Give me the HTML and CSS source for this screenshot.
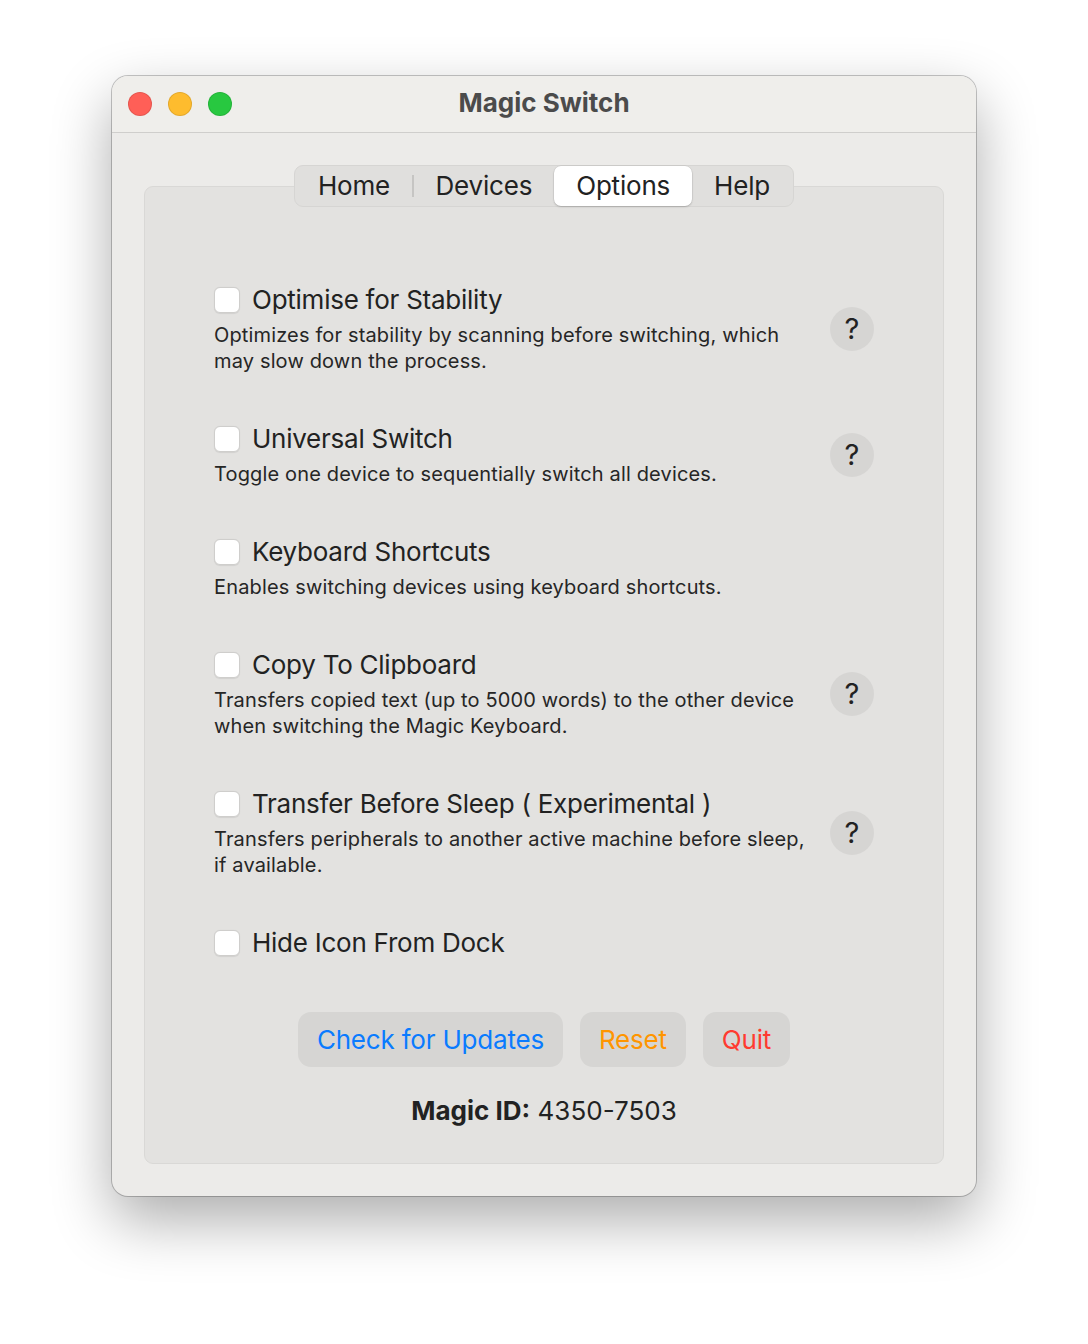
FILE: index.html
```html
<html>
<head>
  <title>Magic Switch</title>
  <link rel="stylesheet" href="styles.css">
</head>
<body>
  <div class="window">
    <div class="titlebar">
      <div class="lights">
        <span class="light close"></span>
        <span class="light min"></span>
        <span class="light max"></span>
      </div>
      <div class="title">Magic Switch</div>
    </div>

    <div class="main">
      <div class="tabs">
        <div class="tab">Home</div>
        <div class="sep"></div>
        <div class="tab">Devices</div>
        <div class="tab active">Options</div>
        <div class="tab">Help</div>
      </div>

      <div class="panel">
        <div class="option">
          <div class="option-text">
            <label class="option-title"><span class="check"></span>Optimise for Stability</label>
            <div class="option-desc">Optimizes for stability by scanning before switching, which may slow down the process.</div>
          </div>
          <div class="help">?</div>
        </div>

        <div class="option">
          <div class="option-text">
            <label class="option-title"><span class="check"></span>Universal Switch</label>
            <div class="option-desc">Toggle one device to sequentially switch all devices.</div>
          </div>
          <div class="help">?</div>
        </div>

        <div class="option">
          <div class="option-text">
            <label class="option-title"><span class="check"></span>Keyboard Shortcuts</label>
            <div class="option-desc">Enables switching devices using keyboard shortcuts.</div>
          </div>
        </div>

        <div class="option">
          <div class="option-text">
            <label class="option-title"><span class="check"></span>Copy To Clipboard</label>
            <div class="option-desc">Transfers copied text (up to 5000 words) to the other device when switching the Magic Keyboard.</div>
          </div>
          <div class="help">?</div>
        </div>

        <div class="option">
          <div class="option-text">
            <label class="option-title"><span class="check"></span>Transfer Before Sleep ( Experimental )</label>
            <div class="option-desc">Transfers peripherals to another active machine before sleep, if available.</div>
          </div>
          <div class="help">?</div>
        </div>

        <div class="option">
          <div class="option-text">
            <label class="option-title"><span class="check"></span>Hide Icon From Dock</label>
          </div>
        </div>

        <div class="actions">
          <button class="btn blue">Check for Updates</button>
          <button class="btn orange">Reset</button>
          <button class="btn red">Quit</button>
        </div>

        <div class="magic-id"><b>Magic ID:</b> 4350-7503</div>
      </div>
    </div>
  </div>
</body>
</html>
```

FILE: styles.css
```css
html, body {
  margin: 0;
  padding: 0;
}
body {
  background: #fff;
  font-family: Inter, "Noto Sans", sans-serif;
  color: #222;
  padding-top: 76px;
  display: flex;
  justify-content: center;
  height: 1344px;
  box-sizing: border-box;
}
.window {
  width: 864px;
  height: 1120px;
  box-sizing: border-box;
  background: #ecebe9;
  border-radius: 16px;
  box-shadow: 0 0 0 1px rgba(0, 0, 0, 0.22), 0 24px 60px rgba(0, 0, 0, 0.33);
  overflow: hidden;
  display: flex;
  flex-direction: column;
}
.titlebar {
  height: 56px;
  flex: none;
  background: #efeeeb;
  border-bottom: 1px solid #cfcecc;
  display: flex;
  align-items: center;
  position: relative;
}
.lights {
  display: flex;
  gap: 16px;
  padding-left: 16px;
}
.light {
  width: 24px;
  height: 24px;
  border-radius: 50%;
  box-sizing: border-box;
  border: 1px solid rgba(0, 0, 0, 0.1);
}
.light.close { background: #ff5f57; }
.light.min { background: #febc2e; }
.light.max { background: #28c840; }
.title {
  position: absolute;
  left: 0;
  right: 0;
  top: 13px;
  text-align: center;
  font-size: 26px;
  line-height: 28px;
  font-weight: 700;
  color: #4b4b4b;
  pointer-events: none;
}
.main {
  flex: 1;
  padding: 32px;
  display: flex;
  flex-direction: column;
  align-items: center;
}
.tabs {
  position: relative;
  z-index: 1;
  display: flex;
  align-items: center;
  height: 42px;
  box-sizing: border-box;
  padding: 1px;
  background: #e0dfdd;
  border: 1px solid #d6d5d3;
  border-radius: 9px;
  margin-bottom: -21px;
}
.tab {
  height: 40px;
  line-height: 40px;
  padding: 0 22px;
  font-size: 26px;
  letter-spacing: -0.2px;
  color: #222;
  border-radius: 7px;
}
.tab.active {
  background: #fff;
  box-shadow: 0 1px 2px rgba(0, 0, 0, 0.18), 0 0 0 0.5px rgba(0, 0, 0, 0.08);
}
.sep {
  width: 1.5px;
  height: 22px;
  background: #c6c5c3;
}
.panel {
  align-self: stretch;
  flex: 1;
  background: #e3e2e0;
  border: 1px solid #d9d8d6;
  border-radius: 9px;
  padding: 96px 69px 0 69px;
  display: flex;
  flex-direction: column;
  gap: 48px;
}
.option {
  display: flex;
  align-items: center;
  gap: 20px;
}
.option-text {
  flex: 1;
  display: flex;
  flex-direction: column;
  gap: 5px;
}
.option-title {
  display: flex;
  align-items: center;
  gap: 12px;
  font-size: 26px;
  line-height: 34px;
  letter-spacing: -0.25px;
  color: #222;
}
.check {
  width: 26px;
  height: 26px;
  box-sizing: border-box;
  background: #fff;
  border: 1px solid #cfcecc;
  border-radius: 6px;
  box-shadow: 0 0.5px 1px rgba(0, 0, 0, 0.08);
}
.option-desc {
  font-size: 20px;
  line-height: 26px;
  letter-spacing: 0.15px;
  color: #262626;
}
.help {
  width: 44px;
  height: 44px;
  flex: none;
  border-radius: 50%;
  background: #d6d5d3;
  font-size: 29px;
  line-height: 44px;
  text-align: center;
  color: #222;
}
.actions {
  display: flex;
  justify-content: center;
  gap: 17px;
  margin-top: 4px;
}
.btn {
  font-family: inherit;
  font-size: 26px;
  letter-spacing: -0.2px;
  height: 55px;
  padding: 0 19px;
  border: none;
  border-radius: 13px;
  background: #d6d5d3;
}
.btn.blue { color: #0a7bff; }
.btn.orange { color: #ff9500; }
.btn.red { color: #ff3b30; }
.magic-id {
  margin-top: -21px;
  text-align: center;
  font-size: 26px;
  line-height: 34px;
  color: #222;
}
.magic-id b {
  font-weight: 700;
}
```
